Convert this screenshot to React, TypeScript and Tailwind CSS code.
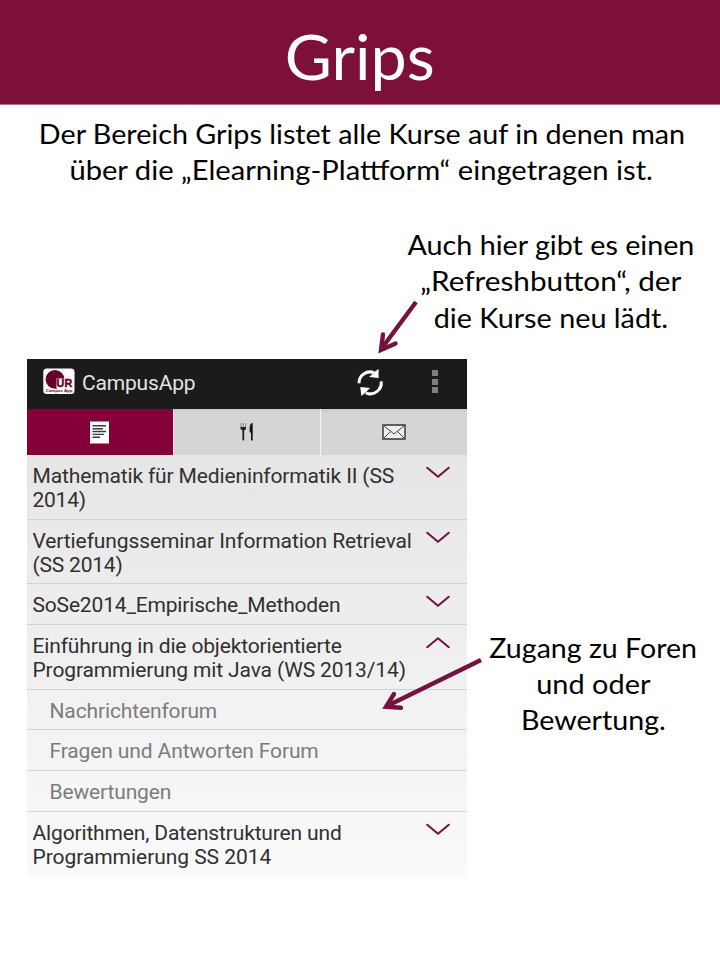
import React from "react";

const slideFont = "font-['Lato',sans-serif]";

function Chevron({ up = false }: { up?: boolean }) {
  return (
    <svg width="24" height="14" viewBox="0 0 24 14" fill="none" className="mt-[11px] mr-[17px] shrink-0">
      <path
        d={up ? "M1.2 11.2 L12 2.3 L22.8 11.2" : "M1.2 1.8 L12 10.8 L22.8 1.8"}
        stroke="#741443"
        strokeWidth="2.1"
        strokeLinecap="round"
        strokeLinejoin="round"
      />
    </svg>
  );
}

function Course({ lines, up, height }: { lines: [string, string][]; up?: boolean; height: string }) {
  return (
    <div className={`flex justify-between border-b border-[#d1d1d1] ${height}`}>
      <div className="pt-[9px] pl-[5.5px] text-[21px] leading-[24px] text-[#303030]">
        {lines.map(([text, tracking]) => (
          <div key={text} className={`whitespace-nowrap ${tracking}`}>
            {text}
          </div>
        ))}
      </div>
      <Chevron up={up} />
    </div>
  );
}

function SubItem({ text, tracking }: { text: string; tracking: string }) {
  return (
    <div className="h-[40.75px] border-b border-[#d5d5d5] pt-[9px] pl-[22.5px] text-[21px] leading-[24px] text-[#7c7c7c]">
      <span className={tracking}>{text}</span>
    </div>
  );
}

function AppLogo() {
  return (
    <svg width="32" height="27" viewBox="0 0 32 27">
      <rect x="0.3" y="0.5" width="31.2" height="25.5" rx="3.5" fill="#fdfafb" />
      <circle cx="12" cy="11.3" r="9.4" fill="#68002d" />
      <path d="M13.5 10.5H23V20H13.5Z" fill="#fdfafb" />
      <text x="13.6" y="18.7" textLength="15.6" lengthAdjust="spacingAndGlyphs" fontFamily="Liberation Sans, sans-serif" fontWeight="700" fontSize="11" fill="#68002d" stroke="#68002d" strokeWidth="0.4">UR</text>
      <text x="2.8" y="24.4" textLength="26.5" lengthAdjust="spacingAndGlyphs" fontFamily="Liberation Sans, sans-serif" fontWeight="700" fontSize="4.2" fill="#68002d">Campus App</text>
    </svg>
  );
}

function RefreshIcon() {
  return (
    <svg width="28" height="30" viewBox="0 0 28 30" fill="none">
      <path d="M3 15.2 A11 11 0 0 1 18 4.7" stroke="#fff" strokeWidth="3" />
      <path d="M22.6 1 V10 L13 9 L16 6.5 L19 3.5 Z" fill="#fff" />
      <path d="M25.2 13.4 A11 11 0 0 1 9.8 24.8" stroke="#fff" strokeWidth="3" />
      <path d="M5.3 28 L4.3 19 L14 20 L11 23 L8.5 25.5 Z" fill="#fff" />
    </svg>
  );
}

function Phone() {
  return (
    <section className="flex h-[517.5px] w-[439.5px] shrink-0 flex-col overflow-hidden font-['Roboto',sans-serif]">
      <header className="flex h-[50.5px] shrink-0 items-start bg-[#1b1b1b]">
        <div className="mt-[9.5px] ml-[16px]"><AppLogo /></div>
        <span className="mt-[11.5px] ml-[7px] w-[276px] text-[21px] leading-[26px] tracking-[-0.18px] text-[#e4e4e4]">CampusApp</span>
        <div className="mt-[9.5px] -ml-[2px]"><RefreshIcon /></div>
        <div className="mt-[11.5px] ml-[47.5px] flex flex-col gap-[2.7px]">
          <i className="size-[6px] bg-[#808080]" />
          <i className="size-[6px] bg-[#808080]" />
          <i className="size-[6px] bg-[#808080]" />
        </div>
      </header>
      <nav className="grid h-[46px] shrink-0 grid-cols-3 gap-[1.5px] bg-[#f7f7f7]">
        <div className="flex justify-center bg-[#850039]">
          <svg width="19" height="23" viewBox="0 0 19 23" className="mt-[11.5px]">
            <path d="M0 0.5H19V22.5H0Z" fill="#fff" />
            <path d="M2.5 4.8H16M2.5 7.7H13M2.5 10.5H16M2.5 13.4H14M2.5 16.2H10" stroke="#3c3c3c" strokeWidth="1.4" />
          </svg>
        </div>
        <div className="flex justify-center bg-linear-to-b from-[#c9c9c9] via-[#d5d5d5] via-10% to-[#d5d5d5]">
          <svg width="14" height="20" viewBox="0 0 14 20" className="mt-[13px]">
            <path d="M1 1V6M3.3 1V6M5.5 1V6" stroke="#777" strokeWidth="0.8" />
            <path d="M0.5 5H6V7L4.2 8.5V18Q3.3 19 2.4 18V8.5L0.5 7Z" fill="#222" />
            <path d="M12.7 1C10 1 9.5 4 9.7 10L11 11V18.5H12.7Z" fill="#151515" />
          </svg>
        </div>
        <div className="flex justify-center bg-linear-to-b from-[#c9c9c9] via-[#d5d5d5] via-10% to-[#d5d5d5]">
          <svg width="24" height="16" viewBox="0 0 24 16" fill="none" className="mt-[15px]">
            <path d="M1 1H23V15H1Z" fill="#eee" stroke="#333" strokeWidth="1.4" />
            <path d="M1.5 1.5L12 10L22.5 1.5M1.5 14.5L8.6 7.4M22.5 14.5L15.4 7.4" stroke="#444" />
          </svg>
        </div>
      </nav>
      <div className="flex-1 bg-linear-to-b from-[#e6e6e6] to-[#fafafa]">
        <Course height="h-[64.5px]" lines={[["Mathematik für Medieninformatik II (SS", "tracking-[-0.14px]"], ["2014)", "tracking-[-0.25px]"]]} />
        <Course height="h-[64.5px]" lines={[["Vertiefungsseminar Information Retrieval", "tracking-[-0.11px]"], ["(SS 2014)", "tracking-[-0.2px]"]]} />
        <Course height="h-[41px]" lines={[["SoSe2014_Empirische_Methoden", "tracking-[-0.17px]"]]} />
        <Course up height="h-[64.5px]" lines={[["Einführung in die objektorientierte", "tracking-[-0.15px]"], ["Programmierung mit Java (WS 2013/14)", "tracking-[-0.13px]"]]} />
        <SubItem text="Nachrichtenforum" tracking="tracking-[-0.13px]" />
        <SubItem text="Fragen und Antworten Forum" tracking="tracking-[-0.12px]" />
        <SubItem text="Bewertungen" tracking="tracking-[-0.15px]" />
        <Course height="h-[66px]" lines={[["Algorithmen, Datenstrukturen und", "tracking-[-0.15px]"], ["Programmierung SS 2014", "tracking-[-0.05px]"]]} />
      </div>
    </section>
  );
}

export default function App() {
  return (
    <main className={`relative flex h-[963px] w-[720px] flex-col overflow-hidden bg-white text-black ${slideFont}`}>
      <header className="flex h-[105px] shrink-0 justify-center border-b border-[#b5718d] bg-[#7c103a] pt-[21px] text-white">
        <h1 className="scale-x-[1.06] text-[61px] leading-[72px]">Grips</h1>
      </header>
      <div className="flex flex-col items-center pt-[11px] pl-[3px] text-[27px] leading-[36px] whitespace-nowrap">
        <p className="scale-x-[1.063]">Der Bereich Grips listet alle Kurse auf in denen man</p>
        <p className="scale-x-[1.08]">über die „Elearning-Plattform“ eingetragen ist.</p>
      </div>
      <div className="mt-[39px] ml-[401px] flex h-[131.5px] w-[300px] shrink-0 flex-col items-center text-[27px] leading-[36px] whitespace-nowrap">
        <p className="scale-x-[1.063]">Auch hier gibt es einen</p>
        <p className="scale-x-[1.1]">„Refreshbutton“, der</p>
        <p className="pt-px scale-x-[1.066]">die Kurse neu lädt.</p>
      </div>
      <div className="flex pl-[27px]">
        <Phone />
        <aside className="flex w-[253px] flex-col items-center pt-[271.5px] text-[27px] leading-[36px] whitespace-nowrap">
          <p className="scale-x-[1.058]">Zugang zu Foren</p>
          <p className="scale-x-[1.07]">und oder</p>
          <p className="scale-x-[1.06]">Bewertung.</p>
        </aside>
      </div>
      <svg className="pointer-events-none absolute inset-0" width="720" height="963" fill="none">
        <path d="M416 302L382 348" stroke="#76123e" strokeWidth="4.4" />
        <path d="M383 334.5L381 350L395.5 343.5" stroke="#76123e" strokeWidth="4.4" strokeLinecap="round" />
        <path d="M481 660L387 706" stroke="#76123e" strokeWidth="4.6" />
        <path d="M394 694L386 706.8L401 707.8" stroke="#76123e" strokeWidth="4.4" strokeLinecap="round" />
      </svg>
    </main>
  );
}
